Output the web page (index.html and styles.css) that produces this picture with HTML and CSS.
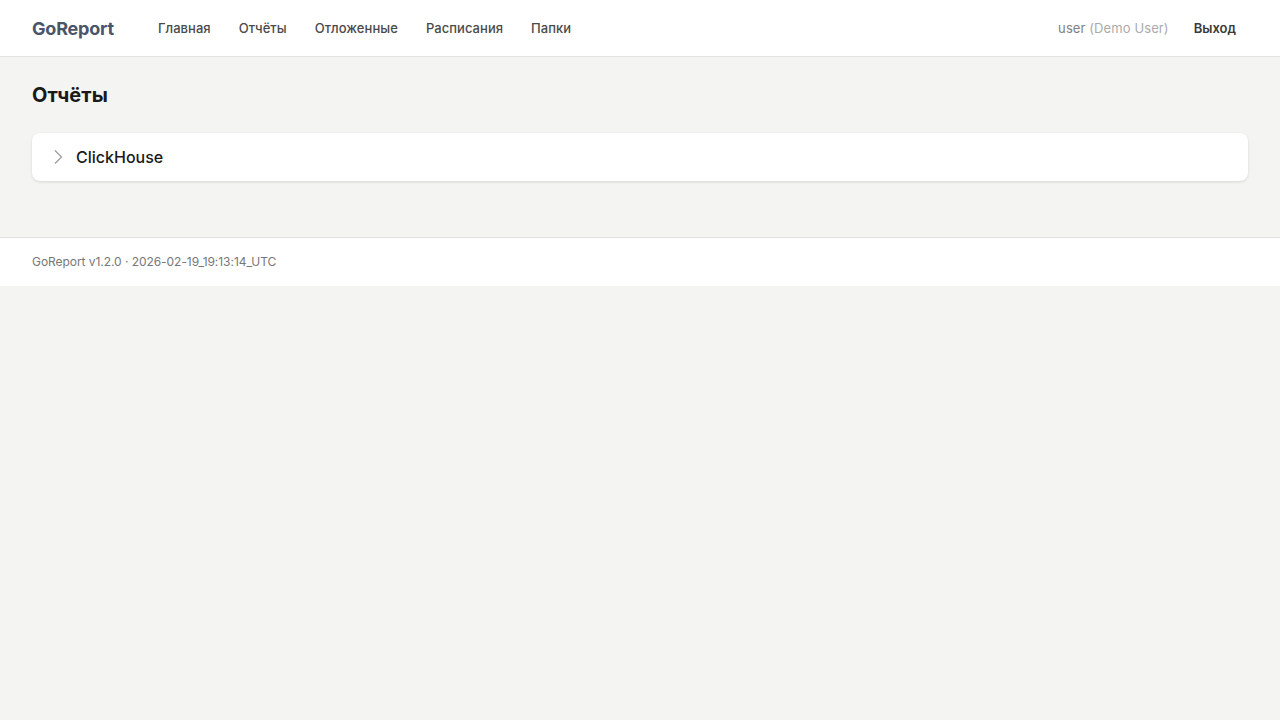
FILE: index.html
```html
<html>
<head>
	<meta charset="utf-8">
	<title>GoReport</title>
	<link rel="stylesheet" href="styles.css">
</head>
<body>
	<div class="header">
		<a href="#" class="logo">GoReport</a>
		<ul class="nav">
			<li><a href="#">Главная</a></li>
			<li><a href="#">Отчёты</a></li>
			<li><a href="#">Отложенные</a></li>
			<li><a href="#">Расписания</a></li>
			<li><a href="#">Папки</a></li>
		</ul>
		<div class="userBox">
			<span class="login">user <span class="fullName">(Demo User)</span></span>
			<a href="#" class="logout">Выход</a>
		</div>
	</div>
	<div class="main">
		<h2>Отчёты</h2>
		<div class="folder">
			<svg class="arrow" width="16" height="16" viewBox="0 0 16 16"><path d="M3 1.5 L9.5 8 L3 14.5" fill="none" stroke="#9a9a9a" stroke-width="1.2"/></svg>
			<span class="folderName">ClickHouse</span>
		</div>
	</div>
	<div class="footer">
		GoReport v1.2.0 · 2026-02-19_19:13:14_UTC
	</div>
</body>
</html>
```

FILE: styles.css
```css
body, html, div, h2, ul, li{
	padding: 0; margin: 0;
}
body{
	background: #f4f4f2;
	color: #222;
	font: 13px/1.5 Inter, "Noto Sans", sans-serif;
}
a{
	text-decoration: none;
}
.header{
	height: 56px;
	background: #fff;
	border-bottom: 1px solid #e2e2e0;
	display: flex;
	align-items: center;
	padding: 0 32px;
}
.header .logo{
	font-size: 18px;
	font-weight: 700;
	color: #4a5568;
	letter-spacing: -0.2px;
}
.header .nav{
	list-style-type: none;
	display: flex;
	gap: 28px;
	margin-left: 44px;
	padding-top: 2px;
}
.header .nav a{
	color: #4a4a4a;
	font-weight: 500;
	letter-spacing: 0.05px;
}
.header .userBox{
	margin-left: auto;
	display: flex;
	align-items: center;
	padding-top: 2px;
}
.header .login{
	color: #808080;
	letter-spacing: 0.1px;
}
.header .fullName{
	color: #ababab;
}
.header .logout{
	color: #3a3a3a;
	font-weight: 600;
	padding: 4px 12px;
	margin-left: 13px;
}
.main{
	padding: 24px 32px 56px;
}
.main h2{
	font-size: 20px;
	line-height: 28px;
	font-weight: 700;
	color: #1a1a1a;
	margin-bottom: 24px;
}
.folder{
	height: 48px;
	background: #fff;
	border-radius: 8px;
	box-shadow: 0 1px 3px rgba(0, 0, 0, 0.12);
	display: flex;
	align-items: center;
	padding: 0 20px;
}
.folder .arrow{
	margin-right: 8px;
}
.folder .folderName{
	font-size: 16px;
	font-weight: 500;
	color: #1a1a1a;
}
.footer{
	background: #fff;
	border-top: 1px solid #e2e2e0;
	height: 48px;
	line-height: 48px;
	padding: 0 32px;
	font-size: 12px;
	color: #777;
	letter-spacing: -0.05px;
}
```
